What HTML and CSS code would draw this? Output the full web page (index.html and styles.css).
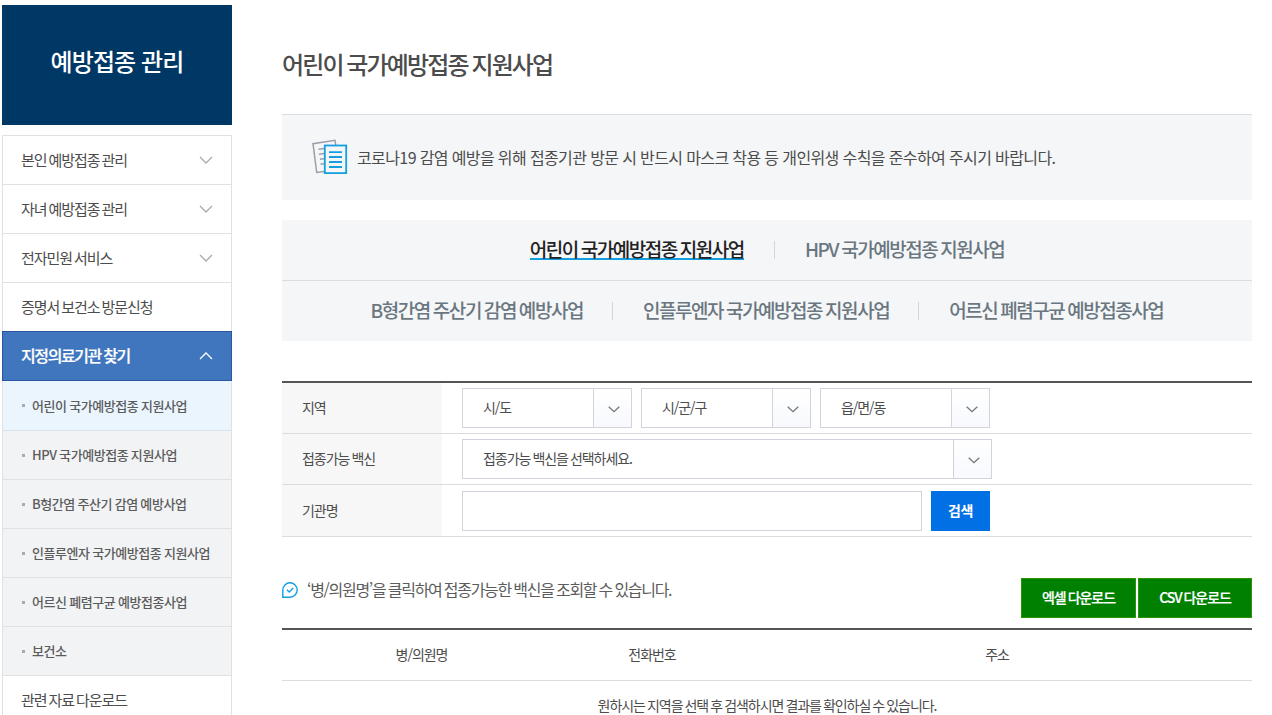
FILE: index.html
```html
<!DOCTYPE html>
<html lang="ko">
<head>
<meta charset="utf-8">
<title>어린이 국가예방접종 지원사업</title>
<link rel="stylesheet" href="styles.css">
</head>
<body>
<div class="page">
  <aside class="side">
    <h2 class="side-title">예방접종 관리</h2>
    <ul class="menu">
      <li class="menu-item"><span>본인 예방접종 관리</span><svg class="arrow" viewBox="0 0 14 8"><path d="M1 1l6 6 6-6"/></svg></li>
      <li class="menu-item"><span>자녀 예방접종 관리</span><svg class="arrow" viewBox="0 0 14 8"><path d="M1 1l6 6 6-6"/></svg></li>
      <li class="menu-item"><span>전자민원 서비스</span><svg class="arrow" viewBox="0 0 14 8"><path d="M1 1l6 6 6-6"/></svg></li>
      <li class="menu-item"><span>증명서 보건소 방문신청</span></li>
      <li class="menu-item active"><span>지정의료기관 찾기</span><svg class="arrow" viewBox="0 0 14 8"><path d="M1 7l6-6 6 6"/></svg></li>
      <li class="sub-item current"><span>어린이 국가예방접종 지원사업</span></li>
      <li class="sub-item"><span>HPV 국가예방접종 지원사업</span></li>
      <li class="sub-item"><span>B형간염 주산기 감염 예방사업</span></li>
      <li class="sub-item"><span>인플루엔자 국가예방접종 지원사업</span></li>
      <li class="sub-item"><span>어르신 폐렴구균 예방접종사업</span></li>
      <li class="sub-item"><span>보건소</span></li>
      <li class="menu-item last"><span>관련 자료 다운로드</span></li>
    </ul>
  </aside>
  <main class="main">
    <h1 class="title">어린이 국가예방접종 지원사업</h1>
    <div class="notice">
      <svg class="doc-icon" viewBox="0 0 36 36">
        <g class="doc-back"><path d="M12 32.5L4.700 33.500L1 4.700L23 1.300L23.700 6"/><path d="M6.500 10.200L12.500 9.400M7 15.200L12 14.500M8 20.200L12 19.700M8.500 25.200L12 24.700"/></g>
        <g class="doc-front"><rect x="12.800" y="6.500" width="21.400" height="27.600"/><path d="M17 13.200h13M17 18h13M17 23h13M17 28h13"/></g>
      </svg>
      <p class="notice-text">코로나19 감염 예방을 위해 접종기관 방문 시 반드시 마스크 착용 등 개인위생 수칙을 준수하여 주시기 바랍니다.</p>
    </div>
    <nav class="tabs">
      <div class="tab-row"><a class="tab on">어린이 국가예방접종 지원사업</a><i class="bar"></i><a class="tab">HPV 국가예방접종 지원사업</a></div>
      <div class="tab-row second"><a class="tab">B형간염 주산기 감염 예방사업</a><i class="bar"></i><a class="tab">인플루엔자 국가예방접종 지원사업</a><i class="bar"></i><a class="tab">어르신 폐렴구균 예방접종사업</a></div>
    </nav>
    <form class="search">
      <div class="row"><label class="label">지역</label>
        <div class="fields">
          <div class="select"><span>시/도</span><b><svg viewBox="0 0 12 7"><path d="M.7.700l5.300 5 5.300-5"/></svg></b></div>
          <div class="select"><span>시/군/구</span><b><svg viewBox="0 0 12 7"><path d="M.7.700l5.300 5 5.300-5"/></svg></b></div>
          <div class="select"><span>읍/면/동</span><b><svg viewBox="0 0 12 7"><path d="M.7.700l5.300 5 5.300-5"/></svg></b></div>
        </div>
      </div>
      <div class="row"><label class="label">접종가능 백신</label>
        <div class="fields">
          <div class="select wide"><span>접종가능 백신을 선택하세요.</span><b><svg viewBox="0 0 12 7"><path d="M.7.700l5.300 5 5.300-5"/></svg></b></div>
        </div>
      </div>
      <div class="row tall"><label class="label">기관명</label>
        <div class="fields"><input class="input" type="text"><button class="submit" type="button">검색</button></div>
      </div>
    </form>
    <div class="info">
      <svg class="chat" viewBox="0 0 16 16"><path d="M.8 15.200V8A7.200 7.200 0 1 1 8 15.200z"/><path d="M4.900 7.800l2.300 2.200 4-4"/></svg>
      <p class="info-text">‘병/의원명’을 클릭하여 접종가능한 백신을 조회할 수 있습니다.</p>
      <div class="downloads"><button class="dl" type="button">엑셀 다운로드</button><button class="dl csv" type="button">CSV 다운로드</button></div>
    </div>
    <div class="results">
      <div class="head"><span>병/의원명</span><span>전화번호</span><span>주소</span></div>
      <p class="empty">원하시는 지역을 선택 후 검색하시면 결과를 확인하실 수 있습니다.</p>
    </div>
  </main>
</div>
</body>
</html>
```
FILE: styles.css
```css
* { box-sizing: border-box; margin: 0; padding: 0; }
html, body { height: 100%; overflow: hidden; }
body { background: #fff; color: #4c4c4c; font-family: "Noto Sans CJK KR", "Noto Sans", sans-serif; font-size: 14px; letter-spacing: -1.05px; word-spacing: -.8px; white-space: nowrap; }
ul { list-style: none; }
svg { fill: none; display: block; }
.page { display: flex; gap: 50px; padding: 5px 20px 0 2px; height: 715px; overflow: hidden; }

.side { flex: 0 0 230px; }
.side-title { height: 120px; line-height: 112px; background: #003865; color: #fff; text-align: center; font-size: 24px; font-weight: 500; letter-spacing: -.9px; word-spacing: 0; }
.menu { margin-top: 10px; border: 1px solid #e1e1e1; border-bottom: 0; }
.menu-item { display: flex; align-items: center; justify-content: space-between; height: 49px; padding: 0 18px 2px; border-bottom: 1px solid #e1e1e1; font-size: 15px; letter-spacing: -1.05px; word-spacing: -1.200px; }
.arrow { width: 14px; height: 8px; margin-top: 2px; stroke: #aaa; stroke-width: 1.300; }
.menu-item.active { height: 50px; margin: -1px -1px 0; padding: 0 18px 2px 18px; background: #3f76be; border: 1px solid #2d55a5; color: #fff; font-size: 16px; letter-spacing: -1.400px; word-spacing: -.8px; font-weight: 500; -webkit-text-stroke: .2px #fff; }
.active .arrow { stroke: #fff; }
.sub-item { display: flex; align-items: center; height: 49px; padding-left: 19px; background: #f2f3f5; border-bottom: 1px solid #e1e1e1; font-size: 13px; font-weight: 500; letter-spacing: -.45px; word-spacing: -.5px; color: #5c5c5c; }
.sub-item > span { padding-bottom: 1px; }
.sub-item::before { content: ""; width: 3px; height: 3px; margin-right: 7px; background: #aaa; }
.sub-item.current { height: 50px; background: #eaf5fe; border-color: #d8e2ec; }

.main { flex: 0 0 970px; }
.title { height: 109px; line-height: 118px; font-size: 24px; font-weight: 500; letter-spacing: -1.850px; word-spacing: -1.200px; }
.notice { display: flex; align-items: center; height: 86px; padding-left: 30px; background: #f5f6f8; border-top: 1px solid #dcdcdc; }
.doc-icon { width: 36px; height: 36px; margin: -2px 9px 0 0; }
.doc-back { stroke: #9a9fa9; stroke-width: 1.500; }
.doc-front { stroke: #139fe0; stroke-width: 1.800; }
.doc-front rect { fill: #f5f6f8; }
.notice-text { padding-bottom: 2px; font-size: 16px; letter-spacing: -.6px; word-spacing: -.1px; }
.tabs { margin-top: 20px; background: #f5f6f8; }
.tab-row { display: flex; align-items: center; justify-content: center; height: 60px; }
.tab-row.second { height: 61px; border-top: 1px solid #dcdcdc; }
.tab { font-size: 19px; line-height: 20px; padding-bottom: 2px; font-weight: 500; letter-spacing: -1.460px; word-spacing: -.9px; color: #6a7680; }
.tab.on { margin-bottom: 1px; padding: 0; line-height: 18px; color: #222; border-bottom: 2px solid #139fe0; }
.bar { width: 1px; height: 18px; margin: 0 30px 0 30px; background: #cfd6de; }
.second .bar { margin-left: 29px; }

.search { margin-top: 40px; border-top: 2px solid #555; }
.row { display: flex; height: 51px; border-bottom: 1px solid #dcdcdc; }
.row.tall { height: 52px; }
.label { display: flex; align-items: center; width: 160px; padding: 0 0 2px 20px; background: #f7f7f7; }
.fields { display: flex; align-items: center; gap: 9px; padding-left: 20px; }
.select { display: flex; width: 170px; height: 40px; border: 1px solid #d2d3dc; }
.select.wide { width: 530px; }
.select span { flex: 1; padding-left: 20px; line-height: 36px; }
.select b { display: flex; align-items: center; justify-content: center; width: 38px; padding-top: 3px; border-left: 1px solid #d2d3dc; background: linear-gradient(#fff, #f7f9fd); }
.select svg { width: 12px; height: 7px; margin-left: 2px; stroke: #777; stroke-width: 1.300; }
.input { width: 460px; height: 40px; border: 1px solid #d2d3dc; background: #fff; }
.submit { width: 59px; height: 40px; padding-bottom: 2px; border: 0; background: #0070e4; color: #fff; font: 700 14px "Noto Sans CJK KR", sans-serif; letter-spacing: -.3px; }

.info { display: flex; height: 91px; padding-top: 41px; }
.chat { width: 16px; height: 16px; margin: 4px 9px 0 0; stroke: #139fe0; stroke-width: 1.400; }
.info-text { flex: 1; font-size: 16px; line-height: 22px; letter-spacing: -1.300px; word-spacing: -.8px; color: #5c5c5c; }
.downloads { display: flex; gap: 2px; }
.dl { width: 115px; height: 40px; padding-bottom: 2px; background: #008000; border: 1px solid #2b9308; color: #fff; font: 500 14px "Noto Sans CJK KR", sans-serif; letter-spacing: -1.050px; word-spacing: -.8px; -webkit-text-stroke: .2px #fff; }
.dl.csv { width: 114px; }
.results { border-top: 2px solid #555; }
.head { display: grid; grid-template-columns: 279px 182px 508px; height: 51px; line-height: 49px; text-align: center; border-bottom: 1px solid #dcdcdc; }
.empty { line-height: 49px; text-align: center; }
```
